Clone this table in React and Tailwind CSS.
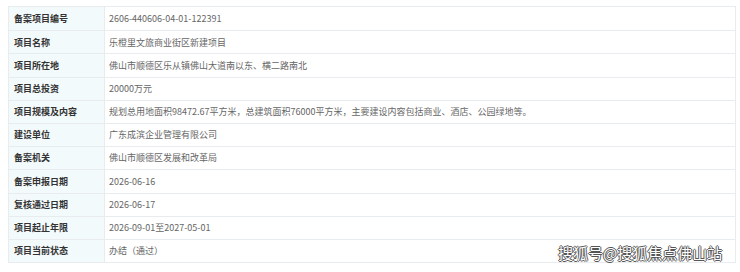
import React from 'react';

const ROWS = [
    ['备案项目编号', '2606-440606-04-01-122391'],
    ['项目名称', '乐橙里文旅商业街区新建项目'],
    ['项目所在地', '佛山市顺德区乐从镇佛山大道南以东、横二路南北'],
    ['项目总投资', '20000万元'],
    ['项目规模及内容', '规划总用地面积98472.67平方米，总建筑面积76000平方米，主要建设内容包括商业、酒店、公园绿地等。'],
    ['建设单位', '广东成滨企业管理有限公司'],
    ['备案机关', '佛山市顺德区发展和改革局'],
    ['备案申报日期', '2026-06-16'],
    ['复核通过日期', '2026-06-17'],
    ['项目起止年限', '2026-09-01至2027-05-01'],
    ['项目当前状态', '办结（通过）'],
];

export default function App() {
    return (
        <div
            className="relative w-[740px] h-[272px] bg-white overflow-hidden pt-[6px] pl-[8px]"
            style={{ fontFamily: '"Microsoft YaHei", "Noto Sans CJK SC", "Noto Sans", sans-serif' }}
        >
            <div className="w-[728px] border border-[#e9ecef]">
                {ROWS.map(([label, value], i) => (
                    <div
                        key={label}
                        className={`flex h-[23.2px] ${i > 0 ? 'border-t border-[#e9ecef]' : ''}`}
                    >
                        <div className="w-[96px] shrink-0 bg-[#f3fafc] border-r border-[#e9ecef] pl-[5px] flex items-center text-[9px] font-bold text-[#333]">
                            {label}
                        </div>
                        <div className="flex-1 pl-[4px] flex items-center text-[9px] text-[#666] whitespace-nowrap">
                            {value}
                        </div>
                    </div>
                ))}
            </div>

            {/* watermark */}
            <div
                className="absolute left-[558px] top-[245px] text-[15px] leading-none text-white whitespace-nowrap"
                style={{
                    textShadow:
                        '1px 0 0 #555, -1px 0 0 #555, 0 1px 0 #555, 0 -1px 0 #555',
                }}
            >
                搜狐号@搜狐焦点佛山站
            </div>
        </div>
    );
}
